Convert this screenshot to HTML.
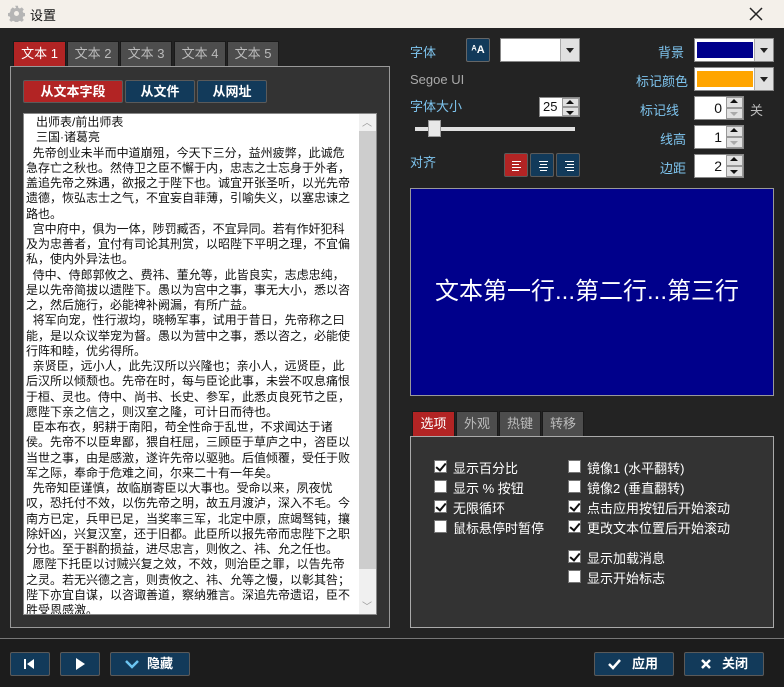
<!DOCTYPE html>
<html><head><meta charset="utf-8"><style>
*{box-sizing:border-box;margin:0;padding:0}
body{width:784px;height:687px;background:#232323;font-family:"Liberation Sans","Noto Sans CJK SC",sans-serif;position:relative;overflow:hidden;font-size:13px}
.a{position:absolute}
.tb{left:0;top:0;width:784px;height:28px;background:#f4f0ea}
.tab{position:absolute;height:26px;background:#4d4d4d;border:1px solid #1a1a1a;border-bottom:none;color:#bbb;font-size:13px;text-align:center;line-height:24px}
.tab.on{background:#b22424;color:#fff}
.btn{position:absolute;background:#123a5a;border:1px solid #5a5a5a;border-radius:2px;color:#fff;text-align:center;font-size:13px;font-weight:bold}
.lbl{position:absolute;color:#7ec4ee;font-size:13px}
.box{position:absolute;background:#fff;border:1px solid #888}
.dd{position:absolute;width:19px;background:#e1e1e1;border-left:1px solid #aaa;top:0;bottom:0;right:0}
.dd:after{content:"";position:absolute;left:5px;top:9px;border:4px solid transparent;border-top:5px solid #222}
.sp{position:absolute;right:0;width:17px;height:50%;background:#e1e1e1;border:1px solid #999}
.sp.u:after{content:"";position:absolute;left:3px;top:1px;border:4px solid transparent;border-bottom:4px solid #111;border-top:none}
.sp.d:after{content:"";position:absolute;left:3px;top:3px;border:4px solid transparent;border-top:4px solid #111;border-bottom:none}
.sp.g:after{border-top-color:#aaa}
.ta{left:23px;top:113px;width:354px;height:502px;background:#fff;border:1px solid #888;overflow:hidden;padding-top:1px}
.ta div{white-space:nowrap;height:15.25px;line-height:15.25px;font-size:12px;color:#111;padding-left:2px}
.cb{position:absolute;width:13px;height:13px;background:#fff;border:1px solid #777}
.ck:after{content:"";position:absolute;left:3px;top:0px;width:4px;height:8px;border:solid #111;border-width:0 2px 2px 0;transform:rotate(40deg)}
.ct{position:absolute;color:#fff;font-size:13px}
</style></head><body>
<div class="a tb"></div>
<svg class="a" style="left:8px;top:5px" width="17" height="17" viewBox="0 0 24 24"><path fill="#b5b5b5" d="M10 1h4l.6 3 2.3 1 2.6-1.7 2.8 2.8-1.7 2.6 1 2.3 3 .6v4l-3 .6-1 2.3 1.7 2.6-2.8 2.8-2.6-1.7-2.3 1-.6 3h-4l-.6-3-2.3-1-2.6 1.7-2.8-2.8 1.7-2.6-1-2.3-3-.6v-4l3-.6 1-2.3L3.8 6.1l2.8-2.8 2.6 1.7 2.3-1z"/><circle cx="12" cy="12" r="3.5" fill="#f4f0ea"/></svg>
<div class="a" style="left:30px;top:5px;font-size:13px;color:#111">设置</div>
<svg class="a" style="left:749px;top:7px" width="14" height="14"><path d="M1 1l12 12M13 1L1 13" stroke="#222" stroke-width="1.5"/></svg>

<div class="tab on" style="left:13px;top:41px;width:53px">文本 1</div>
<div class="tab" style="left:67px;top:41px;width:52px">文本 2</div>
<div class="tab" style="left:120px;top:41px;width:52px">文本 3</div>
<div class="tab" style="left:174px;top:41px;width:52px">文本 4</div>
<div class="tab" style="left:227px;top:41px;width:52px">文本 5</div>
<div class="a" style="left:10px;top:66px;width:380px;height:562px;background:#333;border:1px solid #999"></div>
<div class="btn" style="left:23px;top:80px;width:100px;height:23px;line-height:21px;background:#b22424">从文本字段</div>
<div class="btn" style="left:125px;top:80px;width:70px;height:23px;line-height:21px">从文件</div>
<div class="btn" style="left:197px;top:80px;width:70px;height:23px;line-height:21px">从网址</div>
<div class="a ta">
<div>&nbsp;&nbsp;&nbsp;出师表/前出师表</div>
<div>&nbsp;&nbsp;&nbsp;三国·诸葛亮</div>
<div>&nbsp;&nbsp;先帝创业未半而中道崩殂，今天下三分，益州疲弊，此诚危</div>
<div>急存亡之秋也。然侍卫之臣不懈于内，忠志之士忘身于外者，</div>
<div>盖追先帝之殊遇，欲报之于陛下也。诚宜开张圣听，以光先帝</div>
<div>遗德，恢弘志士之气，不宜妄自菲薄，引喻失义，以塞忠谏之</div>
<div>路也。</div>
<div>&nbsp;&nbsp;宫中府中，俱为一体，陟罚臧否，不宜异同。若有作奸犯科</div>
<div>及为忠善者，宜付有司论其刑赏，以昭陛下平明之理，不宜偏</div>
<div>私，使内外异法也。</div>
<div>&nbsp;&nbsp;侍中、侍郎郭攸之、费祎、董允等，此皆良实，志虑忠纯，</div>
<div>是以先帝简拔以遗陛下。愚以为宫中之事，事无大小，悉以咨</div>
<div>之，然后施行，必能裨补阙漏，有所广益。</div>
<div>&nbsp;&nbsp;将军向宠，性行淑均，晓畅军事，试用于昔日，先帝称之曰</div>
<div>能，是以众议举宠为督。愚以为营中之事，悉以咨之，必能使</div>
<div>行阵和睦，优劣得所。</div>
<div>&nbsp;&nbsp;亲贤臣，远小人，此先汉所以兴隆也；亲小人，远贤臣，此</div>
<div>后汉所以倾颓也。先帝在时，每与臣论此事，未尝不叹息痛恨</div>
<div>于桓、灵也。侍中、尚书、长史、参军，此悉贞良死节之臣，</div>
<div>愿陛下亲之信之，则汉室之隆，可计日而待也。</div>
<div>&nbsp;&nbsp;臣本布衣，躬耕于南阳，苟全性命于乱世，不求闻达于诸</div>
<div>侯。先帝不以臣卑鄙，猥自枉屈，三顾臣于草庐之中，咨臣以</div>
<div>当世之事，由是感激，遂许先帝以驱驰。后值倾覆，受任于败</div>
<div>军之际，奉命于危难之间，尔来二十有一年矣。</div>
<div>&nbsp;&nbsp;先帝知臣谨慎，故临崩寄臣以大事也。受命以来，夙夜忧</div>
<div>叹，恐托付不效，以伤先帝之明，故五月渡泸，深入不毛。今</div>
<div>南方已定，兵甲已足，当奖率三军，北定中原，庶竭驽钝，攘</div>
<div>除奸凶，兴复汉室，还于旧都。此臣所以报先帝而忠陛下之职</div>
<div>分也。至于斟酌损益，进尽忠言，则攸之、祎、允之任也。</div>
<div>&nbsp;&nbsp;愿陛下托臣以讨贼兴复之效，不效，则治臣之罪，以告先帝</div>
<div>之灵。若无兴德之言，则责攸之、祎、允等之慢，以彰其咎；</div>
<div>陛下亦宜自谋，以咨诹善道，察纳雅言。深追先帝遗诏，臣不</div>
<div>胜受恩感激。</div>
<div class="a" style="right:0;top:0;width:17px;height:500px;background:#f0f0f0"></div>
<div class="a" style="right:0;top:17px;width:17px;height:438px;background:#cdcdcd"></div>
<div class="a" style="right:4px;top:2px;font-size:10px;color:#999">︿</div>
<div class="a" style="right:4px;top:486px;font-size:10px;color:#999">﹀</div>
</div>

<div class="lbl" style="left:410px;top:42px">字体</div>
<div class="a" style="left:466px;top:38px;width:24px;height:24px;background:#123a5a;border:1px solid #666;border-radius:2px;color:#fff;font-size:11px;font-weight:bold;text-align:center;line-height:22px">ᴬA</div>
<div class="box" style="left:500px;top:38px;width:80px;height:24px"><div class="dd"></div></div>
<div class="a" style="left:410px;top:72px;color:#aaa;font-size:13px">Segoe UI</div>
<div class="lbl" style="left:410px;top:96px">字体大小</div>
<div class="box" style="left:539px;top:97px;width:41px;height:20px;font-size:13px;line-height:18px;padding-left:3px;color:#111">25<div class="sp u" style="top:0"></div><div class="sp d" style="top:50%"></div></div>
<div class="a" style="left:415px;top:127px;width:160px;height:4px;background:#e0e0e0"></div>
<div class="a" style="left:428px;top:120px;width:13px;height:17px;background:#e8e8e8;border:1px solid #999"></div>
<div class="lbl" style="left:410px;top:152px">对齐</div>
<div class="btn" style="left:504px;top:153px;width:24px;height:24px;background:#b22424"></div>
<div class="btn" style="left:530px;top:153px;width:24px;height:24px"></div>
<div class="btn" style="left:556px;top:153px;width:24px;height:24px"></div>
<svg class="a" style="left:504px;top:153px" width="76" height="24"><g stroke="#fff" stroke-width="1"><path d="M8 8.5h9M8 11.5h7M8 14.5h9M8 17.5h7"/><path d="M35 8.5h9M36 11.5h7M35 14.5h9M36 17.5h7"/><path d="M61 8.5h9M63 11.5h7M61 14.5h9M63 17.5h7"/></g></svg>

<div class="lbl" style="left:658px;top:42px">背景</div>
<div class="box" style="left:694px;top:38px;width:80px;height:24px"><div class="a" style="left:2px;top:3px;width:56px;height:16px;background:#00008b"></div><div class="dd"></div></div>
<div class="lbl" style="left:636px;top:71px">标记颜色</div>
<div class="box" style="left:694px;top:67px;width:80px;height:24px"><div class="a" style="left:2px;top:3px;width:56px;height:16px;background:#ffa500"></div><div class="dd"></div></div>
<div class="lbl" style="left:640px;top:100px">标记线</div>
<div class="box" style="left:694px;top:96px;width:50px;height:24px;text-align:right;padding-right:21px;line-height:22px;font-size:14px;color:#111">0<div class="sp u" style="top:0"></div><div class="sp d g" style="top:50%"></div></div>
<div class="a" style="left:750px;top:100px;color:#bbb">关</div>
<div class="lbl" style="left:660px;top:129px">线高</div>
<div class="box" style="left:694px;top:125px;width:50px;height:24px;text-align:right;padding-right:21px;line-height:22px;font-size:14px;color:#111">1<div class="sp u" style="top:0"></div><div class="sp d g" style="top:50%"></div></div>
<div class="lbl" style="left:660px;top:158px">边距</div>
<div class="box" style="left:694px;top:154px;width:50px;height:24px;text-align:right;padding-right:21px;line-height:22px;font-size:14px;color:#111">2<div class="sp u" style="top:0"></div><div class="sp d" style="top:50%"></div></div>

<div class="a" style="left:410px;top:188px;width:364px;height:208px;background:#00008b;border:1px solid #999;color:#fff;font-size:24px;text-align:center;line-height:206px;padding-right:10px">文本第一行...第二行...第三行</div>

<div class="tab on" style="left:412px;top:411px;width:43px">选项</div>
<div class="tab" style="left:456px;top:411px;width:42px">外观</div>
<div class="tab" style="left:499px;top:411px;width:42px">热键</div>
<div class="tab" style="left:542px;top:411px;width:42px">转移</div>
<div class="a" style="left:410px;top:436px;width:364px;height:192px;background:#333;border:1px solid #aaa"></div>
<div class="cb ck" style="left:434px;top:460px"></div><div class="ct" style="left:453px;top:458px">显示百分比</div>
<div class="cb" style="left:434px;top:480px"></div><div class="ct" style="left:453px;top:478px">显示 % 按钮</div>
<div class="cb ck" style="left:434px;top:500px"></div><div class="ct" style="left:453px;top:498px">无限循环</div>
<div class="cb" style="left:434px;top:520px"></div><div class="ct" style="left:453px;top:518px">鼠标悬停时暂停</div>
<div class="cb" style="left:568px;top:460px"></div><div class="ct" style="left:587px;top:458px">镜像1 (水平翻转)</div>
<div class="cb" style="left:568px;top:480px"></div><div class="ct" style="left:587px;top:478px">镜像2 (垂直翻转)</div>
<div class="cb ck" style="left:568px;top:500px"></div><div class="ct" style="left:587px;top:498px">点击应用按钮后开始滚动</div>
<div class="cb ck" style="left:568px;top:520px"></div><div class="ct" style="left:587px;top:518px">更改文本位置后开始滚动</div>
<div class="cb ck" style="left:568px;top:550px"></div><div class="ct" style="left:587px;top:548px">显示加载消息</div>
<div class="cb" style="left:568px;top:570px"></div><div class="ct" style="left:587px;top:568px">显示开始标志</div>

<div class="a" style="left:0;top:638px;width:784px;height:49px;background:#1c1c1c;border-top:1px solid #777"></div>
<div class="btn" style="left:10px;top:652px;width:40px;height:24px"></div>
<svg class="a" style="left:10px;top:652px" width="40" height="24"><path d="M15 7v10" stroke="#fff" stroke-width="2"/><path d="M24 7v10l-7-5z" fill="#fff"/></svg>
<div class="btn" style="left:60px;top:652px;width:40px;height:24px"></div>
<svg class="a" style="left:60px;top:652px" width="40" height="24"><path d="M16 6v12l9-6z" fill="#fff"/></svg>
<div class="btn" style="left:110px;top:652px;width:80px;height:24px;line-height:22px;padding-left:20px">隐藏</div>
<svg class="a" style="left:110px;top:652px" width="40" height="24"><path d="M16 9l6 6 6-6" stroke="#6cc4f0" stroke-width="2.5" fill="none"/></svg>
<div class="btn" style="left:594px;top:652px;width:80px;height:24px;line-height:22px;padding-left:22px">应用</div>
<svg class="a" style="left:594px;top:652px" width="40" height="24"><path d="M15 12l4 4 7-8" stroke="#fff" stroke-width="2.5" fill="none"/></svg>
<div class="btn" style="left:684px;top:652px;width:80px;height:24px;line-height:22px;padding-left:22px">关闭</div>
<svg class="a" style="left:684px;top:652px" width="40" height="24"><path d="M18 8l8 8M26 8l-8 8" stroke="#fff" stroke-width="2.5"/></svg>
</body></html>
